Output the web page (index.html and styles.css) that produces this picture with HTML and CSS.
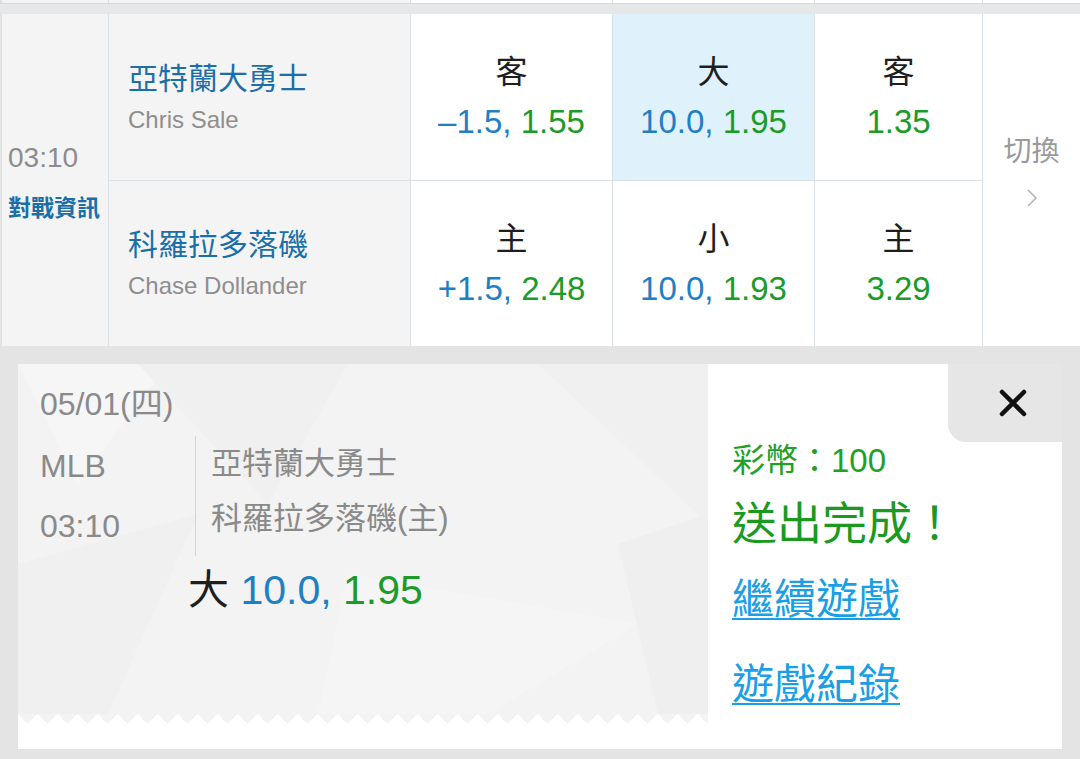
FILE: index.html
```html
<!DOCTYPE html>
<html lang="zh-Hant">
<head>
<meta charset="UTF-8">
<meta name="viewport" content="width=device-width, initial-scale=1.0">
<title>投注完成</title>
<link rel="stylesheet" href="styles.css">
</head>
<body>

<div class="prev">
    <div class="cell-gray"></div>
    <div class="cell-gray"></div>
    <div class="cell-white"></div>
    <div class="cell-white"></div>
    <div class="cell-white"></div>
    <div class="cell-white"></div>
</div>
<div class="band"></div>

<div class="board">
    <div class="time-cell">
        <div class="time">03:10</div>
        <div class="info">對戰資訊</div>
    </div>

    <div class="team">
        <div class="team-name">亞特蘭大勇士</div>
        <div class="pitcher">Chris Sale</div>
    </div>
    <div class="odd">
        <div class="pick">客</div>
        <div class="line"><span class="blue">–1.5,</span> <span class="green">1.55</span></div>
    </div>
    <div class="odd selected">
        <div class="pick">大</div>
        <div class="line"><span class="blue">10.0,</span> <span class="green">1.95</span></div>
    </div>
    <div class="odd">
        <div class="pick">客</div>
        <div class="line"><span class="green">1.35</span></div>
    </div>

    <div class="switch">
        <div class="switch-text">切換</div>
        <svg class="chevron" width="12" height="20" viewBox="0 0 12 20"><path d="M2 2 L10 10 L2 18" fill="none" stroke="#b5b5b5" stroke-width="1.6"/></svg>
    </div>

    <div class="team">
        <div class="team-name">科羅拉多落磯</div>
        <div class="pitcher">Chase Dollander</div>
    </div>
    <div class="odd">
        <div class="pick">主</div>
        <div class="line"><span class="blue">+1.5,</span> <span class="green">2.48</span></div>
    </div>
    <div class="odd">
        <div class="pick">小</div>
        <div class="line"><span class="blue">10.0,</span> <span class="green">1.93</span></div>
    </div>
    <div class="odd">
        <div class="pick">主</div>
        <div class="line"><span class="green">3.29</span></div>
    </div>
</div>

<div class="ticket">
    <div class="ticket-left">
        <svg class="facets" width="690" height="350" viewBox="0 0 690 350">
            <polygon points="0,0 150,0 60,120" fill="#f6f6f6"/>
            <polygon points="120,0 330,0 250,140" fill="#f0f0f0"/>
            <polygon points="0,200 180,150 90,350 0,350" fill="#f0f0f0"/>
            <polygon points="330,210 620,260 470,350 300,350" fill="#f5f5f5"/>
            <polygon points="520,0 690,0 690,160" fill="#f0f0f0"/>
            <polygon points="600,180 690,150 690,350 640,350" fill="#efefef"/>
        </svg>
        <div class="date">05/01(四)</div>
        <div class="game">
            <div class="meta">
                <div>MLB</div>
                <div>03:10</div>
            </div>
            <div class="teams">
                <div>亞特蘭大勇士</div>
                <div>科羅拉多落磯(主)</div>
            </div>
        </div>
        <div class="bet">大 <span class="blue">10.0,</span> <span class="green">1.95</span></div>
    </div>

    <div class="ticket-right">
        <div class="coins">彩幣：100</div>
        <div class="done">送出完成！</div>
        <a class="link" href="#">繼續遊戲</a>
        <a class="link" href="#">遊戲紀錄</a>
    </div>

    <button class="close">
        <svg width="28" height="28" viewBox="0 0 28 28"><path d="M3 3 L25 25 M25 3 L3 25" stroke="#111" stroke-width="4.5" stroke-linecap="round"/></svg>
    </button>
</div>

</body>
</html>
```

FILE: styles.css
```css
body{margin: 0;
    background-color: #e4e4e4;
    font-family: "Liberation Sans", "Noto Sans CJK TC", sans-serif;}

.prev{display: grid;
    grid-template-columns: 106px 301px 201px 201px 167px 1fr;
    gap: 1px;
    height: 3px;
    padding-left: 2px;
    background-color: #d9e0e6;}

.cell-gray{background-color: #f4f4f4;}
.cell-white{background-color: #ffffff;}

.band{height: 10px;
    background-color: #e6e7e8;
    border-top: 1px solid #d6d9dc;}

.board{display: grid;
    grid-template-columns: 106px 301px 201px 201px 167px 1fr;
    grid-template-rows: 166px 165px;
    gap: 1px;
    padding-left: 1px;
    margin-left: 1px;
    background-color: #d9e0e6;}

.time-cell{grid-row: span 2;
    background-color: #f4f4f4;
    display: flex;
    flex-direction: column;
    justify-content: center;
    padding-left: 6px;}

.time{font-size: 28px;
    color: #8c8c8c;
    line-height: 40px;}

.info{font-size: 23px;
    font-weight: bold;
    color: #1b6fa8;
    line-height: 30px;
    margin-top: 15px;}

.team{background-color: #f4f4f4;
    display: flex;
    flex-direction: column;
    justify-content: center;
    padding-left: 19px;}

.team-name{font-size: 30px;
    color: #1b6fa8;
    line-height: 42px;}

.pitcher{font-size: 24px;
    color: #8e8e8e;
    line-height: 34px;
    margin-top: 3px;}

.odd{background-color: #ffffff;
    display: flex;
    flex-direction: column;
    justify-content: center;
    align-items: center;}

.odd.selected{background-color: #dff2fc;}

.pick{font-size: 32px;
    color: #1e1e1e;
    line-height: 44px;}

.line{font-size: 33px;
    line-height: 44px;
    margin-top: 6px;}

.blue{color: #1f7fc4;}
.green{color: #1c9a2a;}

.switch{grid-row: span 2;
    background-color: #ffffff;
    display: flex;
    flex-direction: column;
    justify-content: center;
    align-items: center;
    padding-bottom: 20px;}

.switch-text{font-size: 28px;
    color: #9a9a9a;
    line-height: 40px;}

.chevron{margin-top: 16px;}

.ticket{position: relative;
    display: flex;
    width: 1044px;
    height: 385px;
    margin: 18px 0 0 18px;
    background-color: #ffffff;}

.ticket-left{position: relative;
    width: 690px;
    height: 350px;
    padding: 20px 0 0 22px;
    box-sizing: border-box;
    background-color: #f3f3f3;
    color: #8a8a8a;}

.ticket-left::after{content: "";
    position: absolute;
    left: 0;
    right: 0;
    bottom: -10px;
    height: 10px;
    background: linear-gradient(135deg, #f3f3f3 25%, transparent 25%) -10px 0,
                linear-gradient(225deg, #f3f3f3 25%, transparent 25%) -10px 0;
    background-size: 20px 20px;}

.facets{position: absolute;
    top: 0;
    left: 0;}

.date, .game, .bet{position: relative;}

.date{font-size: 32px;
    line-height: 40px;}

.game{display: flex;
    margin-top: 12px;}

.meta{width: 155px;
    font-size: 32px;
    line-height: 60px;}

.teams{border-left: 1px solid #d4d4d4;
    padding-left: 15px;
    font-size: 31px;
    line-height: 55px;}

.bet{font-size: 41px;
    color: #1e1e1e;
    line-height: 50px;
    margin: 9px 0 0 148px;}

.ticket-right{display: flex;
    flex-direction: column;
    align-items: flex-start;
    padding: 77px 0 0 24px;}

.coins{font-size: 33px;
    color: #20a024;
    line-height: 40px;}

.done{font-size: 45px;
    color: #1a9a1f;
    line-height: 56px;
    margin-top: 16px;}

.link{font-size: 42px;
    line-height: 50px;
    color: #1a9fe6;
    text-decoration: underline;
    text-decoration-thickness: 2px;
    text-underline-offset: 4px;}

.link:first-of-type{margin-top: 22px;}

.link + .link{margin-top: 35px;}

.close{position: absolute;
    top: 0;
    right: 0;
    width: 114px;
    height: 78px;
    border: none;
    padding: 0 0 0 16px;
    background-color: #e6e6e6;
    border-bottom-left-radius: 18px;
    cursor: pointer;
    display: flex;
    align-items: center;
    justify-content: center;}
```
